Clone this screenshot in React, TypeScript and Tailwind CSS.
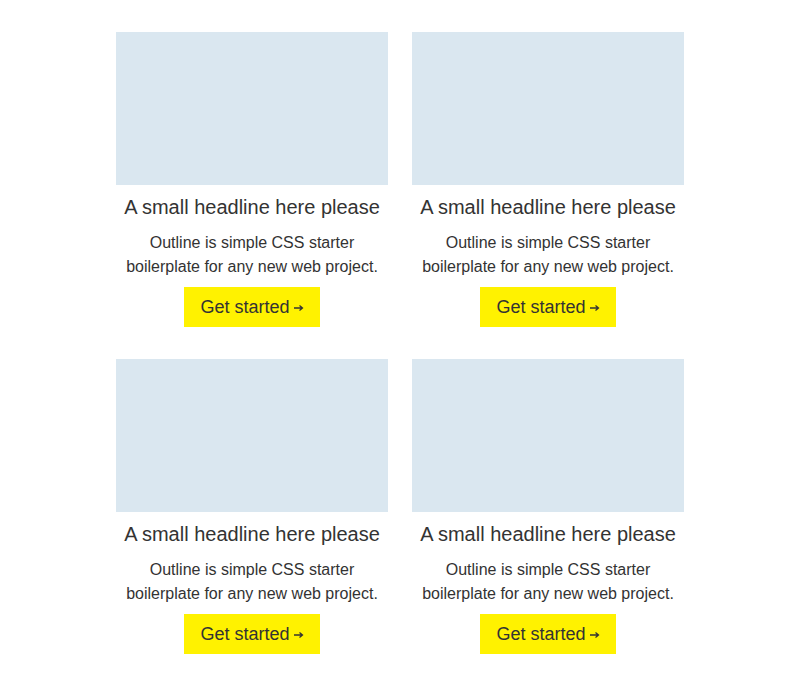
const cards = [1, 2, 3, 4];

function Card() {
  return (
    <div className="flex flex-col items-center text-center">
      <div className="h-[153px] w-full bg-[#dae7f0]"></div>
      <h3 className="mt-2 text-[20px] leading-[28px] text-[#333]">A small headline here please</h3>
      <p className="mt-[10px] text-[16px] leading-6 text-[#333]">
        Outline is simple CSS starter
        <br />
        boilerplate for any new web project.
      </p>
      <a
        href="#"
        className="mt-2 flex h-10 w-[136px] items-center justify-center gap-1 bg-[#fff200] text-[18px] text-[#333]"
      >
        Get started
        <svg width="10" height="8" viewBox="0 0 10 8" className="mt-[2px]">
          <path d="M0 4h8M5.5 1.5L8.5 4L5.5 6.5" stroke="#333" strokeWidth="1.3" fill="none" />
        </svg>
      </a>
    </div>
  );
}

export default function App() {
  return (
    <div className="min-h-screen bg-white pt-8 font-['Liberation_Sans',Arial,sans-serif]">
      <div className="mx-auto grid w-[568px] grid-cols-2 gap-x-6 gap-y-8">
        {cards.map((c) => (
          <Card key={c} />
        ))}
      </div>
    </div>
  );
}
